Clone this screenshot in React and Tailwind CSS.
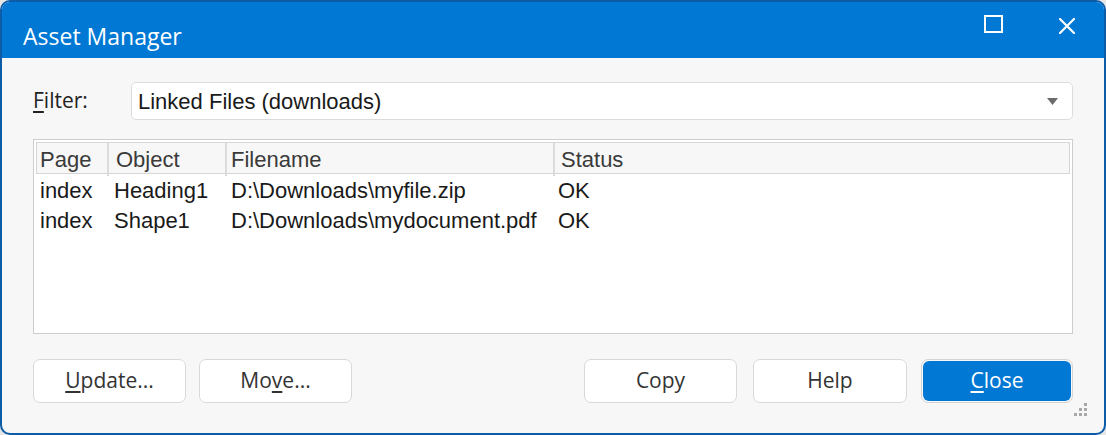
export default function App() {
  const rows = [
    { page: 'index', object: 'Heading1', file: 'D:\\Downloads\\myfile.zip', status: 'OK' },
    { page: 'index', object: 'Shape1', file: 'D:\\Downloads\\mydocument.pdf', status: 'OK' },
  ]
  const ui = { fontFamily: '"Open Sans", "Noto Sans", sans-serif' }
  const arial = { fontFamily: '"Liberation Sans", Arial, sans-serif' }

  return (
    <div className="w-[1106px] h-[435px] bg-[#e6e6e6]">
      <div className="relative h-full flex flex-col rounded-[10px] border-2 border-[#0c5ca8] bg-[#f7f7f7] overflow-hidden">
        {/* Title bar */}
        <div className="h-[56px] bg-[#0078d4] flex items-center pl-[21px] text-white" style={ui}>
          <span className="text-[23px] mt-[12px]">Asset Manager</span>
          <div className="ml-auto flex items-center h-full">
            <svg width="19" height="18" viewBox="0 0 19 18" className="mr-[56px] mt-[-12px]">
              <rect x="1" y="1" width="17" height="16" fill="none" stroke="white" strokeWidth="2" />
            </svg>
            <svg width="16" height="16" viewBox="0 0 16 16" className="mr-[29px] mt-[-9px]">
              <path d="M1 1 L15 15 M15 1 L1 15" stroke="white" strokeWidth="2.2" strokeLinecap="round" />
            </svg>
          </div>
        </div>

        {/* Body */}
        <div className="flex-1 px-[31px] pt-[24px]">
          {/* Filter */}
          <div className="flex items-center h-[38px]">
            <label className="w-[98px] text-[21px] text-[#222]" style={ui}>
              <span className="underline underline-offset-[3px]">F</span>ilter:
            </label>
            <div className="flex-1 h-full flex items-center bg-white border border-[#dcdcdc] rounded-[5px] pl-[6px] pr-[14px]">
              <span className="text-[22px] text-[#1a1a1a]" style={arial}>Linked Files (downloads)</span>
              <svg width="11" height="7" viewBox="0 0 11 7" className="ml-auto">
                <path d="M0 0 L11 0 L5.5 7 Z" fill="#6b6b6b" />
              </svg>
            </div>
          </div>

          {/* List */}
          <div className="mt-[19px] h-[195px] bg-white border border-[#cdcdcd] p-[2px]" style={arial}>
            <div className="grid grid-cols-[70px_118px_328px_1fr] h-[32px] bg-[#f7f7f7] border border-[#d6d6d6] text-[22px] text-[#3a3a3a]">
              <div className="pl-[3px] flex items-center">Page</div>
              <div className="pl-[7px] flex items-center border-l-2 border-[#dcdcdc]">Object</div>
              <div className="pl-[4px] flex items-center border-l-2 border-[#dcdcdc]">Filename</div>
              <div className="pl-[6px] flex items-center border-l-2 border-[#dcdcdc]">Status</div>
            </div>
            {rows.map((r, i) => (
              <div key={i} className="grid grid-cols-[70px_118px_328px_1fr] h-[30px] items-center text-[22px] text-[#1a1a1a]">
                <div className="pl-[4px]">{r.page}</div>
                <div className="pl-[8px]">{r.object}</div>
                <div className="pl-[7px]">{r.file}</div>
                <div className="pl-[6px]">{r.status}</div>
              </div>
            ))}
          </div>

          {/* Buttons */}
          <div className="mt-[25px] flex items-center text-[21px] text-[#333]" style={ui}>
            <button className="w-[153px] h-[44px] bg-white border border-[#d9d9d9] rounded-[7px]">
              <span className="underline underline-offset-[3px]">U</span>pdate...
            </button>
            <button className="ml-[13px] w-[153px] h-[44px] bg-white border border-[#d9d9d9] rounded-[7px]">
              Mo<span className="underline underline-offset-[3px]">v</span>e...
            </button>
            <button className="ml-auto w-[153px] h-[44px] bg-white border border-[#d9d9d9] rounded-[7px]">
              Copy
            </button>
            <button className="ml-[16px] w-[154px] h-[44px] bg-white border border-[#d9d9d9] rounded-[7px]">
              Help
            </button>
            <button className="ml-[14px] w-[152px] h-[44px] border border-[#d4d4d4] rounded-[7px] p-[1px]">
              <span className="flex items-center justify-center w-full h-full bg-[#0078d4] rounded-[6px] text-white">
                <span className="underline underline-offset-[3px]">C</span>lose
              </span>
            </button>
          </div>
        </div>

        {/* Resize grip */}
        <svg width="15" height="13" viewBox="0 0 15 13" className="absolute right-[16px] bottom-[17px]">
          <g fill="#a8a8a8">
            <rect x="11" y="0" width="3" height="3" />
            <rect x="6" y="5" width="3" height="3" />
            <rect x="11" y="5" width="3" height="3" />
            <rect x="1" y="10" width="3" height="3" />
            <rect x="6" y="10" width="3" height="3" />
            <rect x="11" y="10" width="3" height="3" />
          </g>
        </svg>
      </div>
    </div>
  )
}
